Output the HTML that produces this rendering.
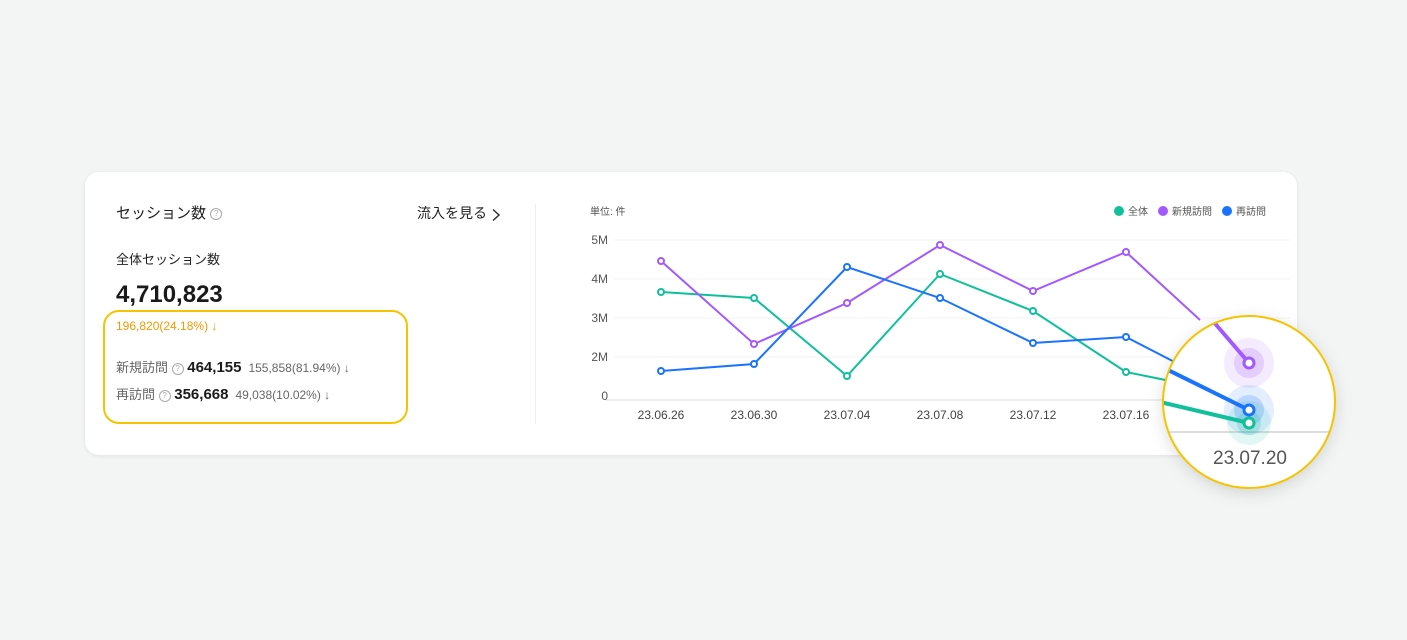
<!DOCTYPE html>
<html><head><meta charset="utf-8"><style>
*{margin:0;padding:0;box-sizing:border-box}
body{width:1407px;height:640px;background:#f3f5f4;position:relative;overflow:hidden;font-family:"Liberation Sans","Noto Sans CJK JP",sans-serif;color:#1a1a1a}
.card{position:absolute;left:85px;top:172px;width:1212px;height:283px;background:#fff;border-radius:14px;box-shadow:0 1px 4px rgba(0,0,0,.08)}
.t{position:absolute;white-space:nowrap;line-height:1.2}
.q{display:inline-block;width:12px;height:12px;border:1px solid #aaa;border-radius:50%;font-size:8px;line-height:10px;text-align:center;color:#aaa;vertical-align:middle}
</style></head><body>
<div class="card"></div>
<div class="t" style="left:116px;top:205px;font-size:15px;color:#222">セッション数 <span class="q">?</span></div>
<div class="t" style="left:417px;top:205px;font-size:14px;color:#222">流入を見る</div>
<svg style="position:absolute;left:491px;top:208px" width="10" height="14"><path d="M2 1.5L8 7L2 12.5" fill="none" stroke="#333" stroke-width="1.5"/></svg>
<div class="t" style="left:116px;top:252px;font-size:13px;color:#222">全体セッション数</div>
<div class="t" style="left:116px;top:281px;font-size:24px;font-weight:bold;color:#1a1a1a">4,710,823</div>
<div style="position:absolute;left:103px;top:310px;width:305px;height:114px;border:2px solid #f5c400;border-radius:16px"></div>
<div class="t" style="left:116px;top:319px;font-size:12px;color:#f29a00">196,820(24.18%) ↓</div>
<div class="t" style="left:116px;top:359px;font-size:13px;color:#666">新規訪問 <span class="q">?</span> <span style="color:#1a1a1a;font-size:15px;font-weight:bold">464,155</span> <span style="font-size:12px;color:#666">&nbsp;155,858(81.94%) ↓</span></div>
<div class="t" style="left:116px;top:386px;font-size:13px;color:#666">再訪問 <span class="q">?</span> <span style="color:#1a1a1a;font-size:15px;font-weight:bold">356,668</span> <span style="font-size:12px;color:#666">&nbsp;49,038(10.02%) ↓</span></div>
<div style="position:absolute;left:535px;top:204px;width:1px;height:220px;background:#eee"></div>
<svg width="1407" height="640" style="position:absolute;left:0;top:0" font-family="Liberation Sans,Noto Sans CJK JP,sans-serif">
<text x="590" y="215" font-size="10" fill="#555">単位: 件</text>
<circle cx="1119" cy="211" r="5" fill="#10c09a"/><text x="1128" y="215" font-size="10" fill="#555">全体</text>
<circle cx="1163" cy="211" r="5" fill="#a259ff"/><text x="1172" y="215" font-size="10" fill="#555">新規訪問</text>
<circle cx="1227" cy="211" r="5" fill="#1a73ff"/><text x="1236" y="215" font-size="10" fill="#555">再訪問</text>
<g stroke="#f3f3f3"><line x1="614" y1="240" x2="1290" y2="240"/><line x1="614" y1="279" x2="1290" y2="279"/><line x1="614" y1="318" x2="1290" y2="318"/><line x1="614" y1="357" x2="1290" y2="357"/></g>
<line x1="606" y1="400" x2="1290" y2="400" stroke="#ddd"/>
<g font-size="12" fill="#555" text-anchor="end"><text x="608" y="244">5M</text><text x="608" y="283">4M</text><text x="608" y="322">3M</text><text x="608" y="361">2M</text><text x="608" y="400">0</text></g>
<g font-size="12" fill="#444" text-anchor="middle"><text x="661" y="419">23.06.26</text><text x="754" y="419">23.06.30</text><text x="847" y="419">23.07.04</text><text x="940" y="419">23.07.08</text><text x="1033" y="419">23.07.12</text><text x="1126" y="419">23.07.16</text></g>
<g fill="#fff" stroke-width="2">
<polyline fill="none" stroke="#10c09a" points="661,292 754,298 847,376 940,274 1033,311 1126,372 1190,385"/>
<polyline fill="none" stroke="#a259ff" points="661,261 754,344 847,303 940,245 1033,291 1126,252 1200,320"/>
<polyline fill="none" stroke="#1a73ff" points="661,371 754,364 847,267 940,298 1033,343 1126,337 1190,370"/>
<g stroke="#10c09a"><circle cx="661" cy="292" r="3"/><circle cx="754" cy="298" r="3"/><circle cx="847" cy="376" r="3"/><circle cx="940" cy="274" r="3"/><circle cx="1033" cy="311" r="3"/><circle cx="1126" cy="372" r="3"/></g>
<g stroke="#a259ff"><circle cx="661" cy="261" r="3"/><circle cx="754" cy="344" r="3"/><circle cx="847" cy="303" r="3"/><circle cx="940" cy="245" r="3"/><circle cx="1033" cy="291" r="3"/><circle cx="1126" cy="252" r="3"/></g>
<g stroke="#1a73ff"><circle cx="661" cy="371" r="3"/><circle cx="754" cy="364" r="3"/><circle cx="847" cy="267" r="3"/><circle cx="940" cy="298" r="3"/><circle cx="1033" cy="343" r="3"/><circle cx="1126" cy="337" r="3"/></g>
</g>
<defs><clipPath id="c"><circle cx="1249" cy="402" r="86"/></clipPath><filter id="s" x="-30%" y="-30%" width="160%" height="160%"><feDropShadow dx="0" dy="4" stdDeviation="8" flood-opacity="0.15"/></filter></defs>
<circle cx="1249" cy="402" r="86" fill="#fff" filter="url(#s)"/>
<g clip-path="url(#c)">
<line x1="1160" y1="432" x2="1340" y2="432" stroke="#ddd" stroke-width="2"/>
<text x="1250" y="464" font-size="19" fill="#555" text-anchor="middle">23.07.20</text>
<circle cx="1249" cy="363" r="25" fill="#a259ff" opacity="0.12"/><circle cx="1249" cy="363" r="15" fill="#a259ff" opacity="0.2"/>
<circle cx="1249" cy="410" r="25" fill="#1a73ff" opacity="0.12"/><circle cx="1249" cy="410" r="15" fill="#1a73ff" opacity="0.2"/>
<circle cx="1249" cy="423" r="22" fill="#10c09a" opacity="0.12"/><circle cx="1249" cy="423" r="12" fill="#10c09a" opacity="0.2"/>
<line x1="1212" y1="320" x2="1249" y2="363" stroke="#a259ff" stroke-width="4"/>
<line x1="1160" y1="366" x2="1249" y2="410" stroke="#1a73ff" stroke-width="4"/>
<line x1="1160" y1="402" x2="1249" y2="423" stroke="#10c09a" stroke-width="4"/>
<circle cx="1249" cy="363" r="5" fill="#fff" stroke="#a259ff" stroke-width="3"/>
<circle cx="1249" cy="410" r="5" fill="#fff" stroke="#1a73ff" stroke-width="3"/>
<circle cx="1249" cy="423" r="5" fill="#fff" stroke="#10c09a" stroke-width="3"/>
</g>
<circle cx="1249" cy="402" r="86" fill="none" stroke="#f5c400" stroke-width="2"/>
</svg>
</body></html>
